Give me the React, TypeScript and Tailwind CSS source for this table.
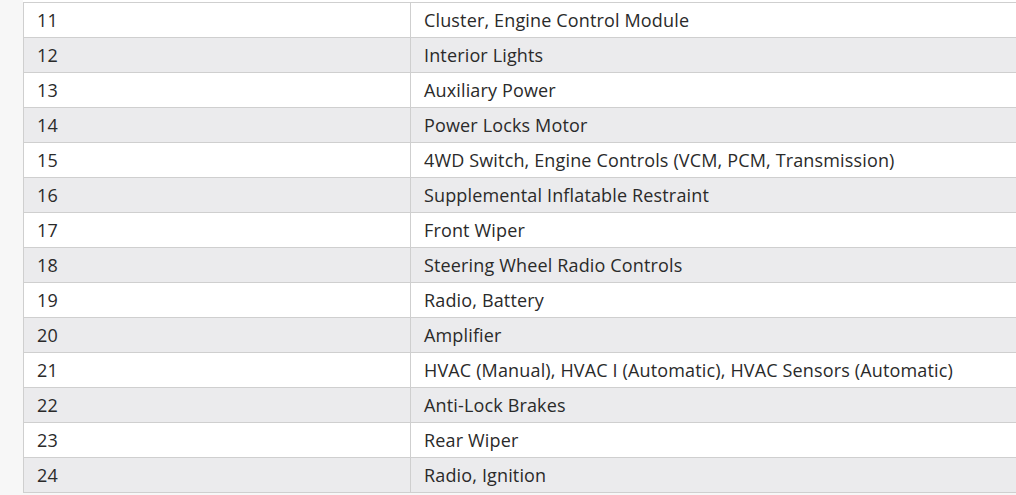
import React from "react";

const rows: [string, string][] = [
  ["11", "Cluster, Engine Control Module"],
  ["12", "Interior Lights"],
  ["13", "Auxiliary Power"],
  ["14", "Power Locks Motor"],
  ["15", "4WD Switch, Engine Controls (VCM, PCM, Transmission)"],
  ["16", "Supplemental Inflatable Restraint"],
  ["17", "Front Wiper"],
  ["18", "Steering Wheel Radio Controls"],
  ["19", "Radio, Battery"],
  ["20", "Amplifier"],
  ["21", "HVAC (Manual), HVAC I (Automatic), HVAC Sensors (Automatic)"],
  ["22", "Anti-Lock Brakes"],
  ["23", "Rear Wiper"],
  ["24", "Radio, Ignition"],
];

export default function App() {
  return (
    <div
      className="h-[495px] w-[1016px] overflow-hidden bg-[#f7f7f7] pl-[23px] text-[18px] tracking-[0.15px] text-[#2a2a2a]"
      style={{ fontFamily: '"Open Sans", "Noto Sans", sans-serif' }}
    >
      <div className="h-[2px] w-[1100px] bg-white" />
      <table className="w-[1100px] border-collapse">
        <tbody>
          {rows.map(([num, desc], i) => (
            <tr key={num} className={i % 2 === 1 ? "bg-[#ebebed]" : "bg-white"}>
              <td className="h-[35px] w-[387px] border border-[#cfcfcf] pt-0 pb-[1px] pl-[13px] leading-none">
                {num}
              </td>
              <td className="h-[35px] border border-[#cfcfcf] pt-0 pb-[1px] pl-[13px] leading-none">
                {desc}
              </td>
            </tr>
          ))}
        </tbody>
      </table>
    </div>
  );
}
